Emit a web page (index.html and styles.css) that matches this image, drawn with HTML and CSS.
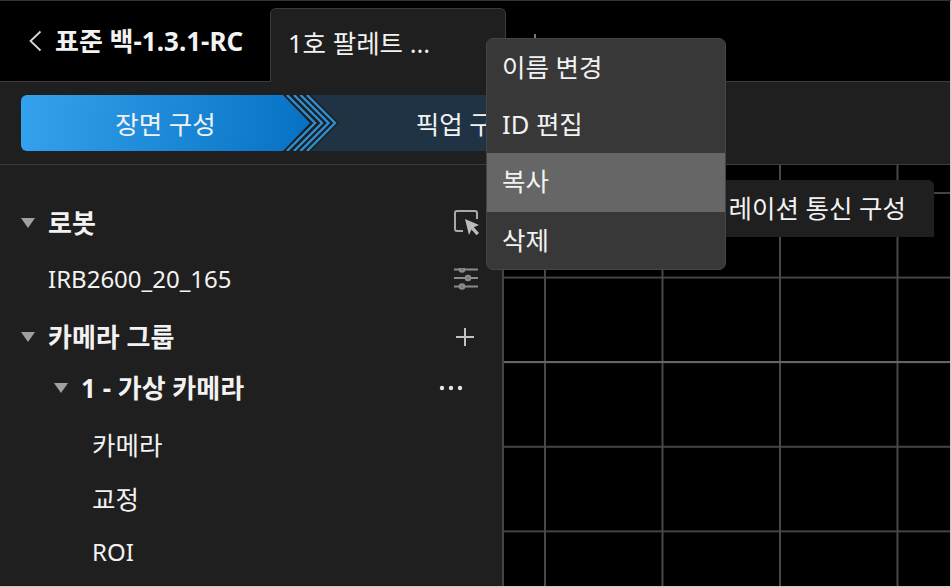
FILE: index.html
```html
<!DOCTYPE html>
<html lang="ko">
<head>
    <meta charset="UTF-8">
    <meta name="viewport" content="width=device-width, initial-scale=1.0">
    <title>표준 백-1.3.1-RC</title>
    <link rel="stylesheet" href="styles.css">
</head>
<body>
    <div class="app">
        <div class="topbar">
            <div class="back">
                <svg class="back-icon" width="14" height="22" viewBox="0 0 14 22">
                    <path d="M12.500 1.500 L2.500 11 L12.500 20.500" fill="none" stroke="#d8d8d8" stroke-width="1.800"/>
                </svg>
                <span class="back-title">표준 백-1.3.1-RC</span>
            </div>
            <div class="tab">1호 팔레트 ...</div>
            <svg class="tab-add" width="20" height="20" viewBox="0 0 20 20">
                <path d="M10 0 V20 M0 10 H20" stroke="#999" stroke-width="1.600"/>
            </svg>
        </div>

        <div class="toolbar">
            <div class="step step-active">장면 구성</div>
            <svg class="step-arrows" width="56" height="56" viewBox="0 0 56 56">
                <g fill="none" stroke="#2b8fd6" stroke-width="2.400">
                    <path d="M4 0 L32 28 L4 56"/>
                    <path d="M11 0 L39 28 L11 56"/>
                    <path d="M17.500 0 L45.500 28 L17.500 56"/>
                    <path d="M24 0 L52 28 L24 56"/>
                </g>
            </svg>
            <div class="step step-next">픽업 구성</div>
        </div>

        <div class="main">
            <div class="sidebar">
                <div class="row">
                    <span class="caret"></span>
                    <span class="row-label bold">로봇</span>
                    <svg class="row-icon row-icon-edge" width="26" height="26" viewBox="0 0 26 26">
                        <path d="M9 21 H3 Q1 21 1 19 V3 Q1 1 3 1 H21 Q23 1 23 3 V9" fill="none" stroke="#a8a8a8" stroke-width="2"/>
                        <path d="M11 9 L25 15 L19.800 17.300 L25 23 L22.500 25.300 L17.500 19.500 L15 25 Z" fill="#bcbcbc"/>
                    </svg>
                </div>
                <div class="row row-gap">
                    <span class="row-label leaf-top latin">IRB2600_20_165</span>
                    <svg class="row-icon row-icon-edge" width="26" height="24" viewBox="0 0 26 24">
                        <g fill="#777" stroke="#8c8c8c" stroke-width="2">
                            <path d="M0 1.500 H24 M0 10 H24 M0 18.500 H24"/>
                            <circle cx="8" cy="1.500" r="2.300"/>
                            <circle cx="14" cy="10" r="2.300"/>
                            <circle cx="8" cy="18.500" r="2.300"/>
                        </g>
                    </svg>
                </div>
                <div class="row row-gap">
                    <span class="caret"></span>
                    <span class="row-label bold">카메라 그룹</span>
                    <svg class="row-icon row-icon-plus" width="18" height="18" viewBox="0 0 18 18">
                        <path d="M9 0 V18 M0 9 H18" stroke="#c0c0c0" stroke-width="2"/>
                    </svg>
                </div>
                <div class="row row-nested">
                    <span class="caret"></span>
                    <span class="row-label bold">1 - 가상 카메라</span>
                    <svg class="row-icon row-icon-dots" width="24" height="6" viewBox="0 0 24 6">
                        <circle cx="3" cy="3" r="2.200" fill="#e4e4e4"/>
                        <circle cx="12" cy="3" r="2.200" fill="#e4e4e4"/>
                        <circle cx="21" cy="3" r="2.200" fill="#e4e4e4"/>
                    </svg>
                </div>
                <div class="row row-leaf row-gap"><span class="row-label">카메라</span></div>
                <div class="row row-leaf"><span class="row-label">교정</span></div>
                <div class="row row-leaf"><span class="row-label latin">ROI</span></div>
            </div>

            <div class="viewport">
                <div class="hint">레이션 통신 구성</div>
            </div>
        </div>

        <div class="menu">
            <div class="menu-item">이름 변경</div>
            <div class="menu-item">ID 편집</div>
            <div class="menu-item menu-item-hover">복사</div>
            <div class="menu-item">삭제</div>
        </div>
    </div>
</body>
</html>
```

FILE: styles.css
```css
* {
    margin: 0;
    padding: 0;
    box-sizing: border-box;
}

body {
    background: #000;
    color: #f2f2f2;
    font-family: "Noto Sans", "Noto Sans CJK KR", sans-serif;
    font-size: 25.5px;
    overflow: hidden;
}

.app {
    position: relative;
    display: flex;
    flex-direction: column;
    height: 100vh;
    overflow: hidden;
    border-top: 1px solid #333;
    border-right: 1px solid #ccc;
    border-bottom: 1px solid #ccc;
}

.latin {
    font-size: 24px;
}

/* top bar */
.topbar {
    display: flex;
    align-items: flex-end;
    height: 81px;
    background: #000;
    border-bottom: 1px solid #3c3c3c;
}

.back {
    display: flex;
    align-items: center;
    gap: 13px;
    width: 270px;
    height: 80px;
    padding: 0 0 0 28px;
}

.back-title {
    padding-bottom: 2px;
    font-size: 26px;
    font-weight: 700;
    white-space: nowrap;
}

.tab {
    width: 236px;
    height: 74px;
    margin-bottom: -1px;
    padding: 14px 0 0 17px;
    background: #1f1f1f;
    border: 1px solid #3c3c3c;
    border-bottom: none;
    border-radius: 6px 6px 0 0;
}

.tab-add {
    flex: none;
    margin: 0 0 27px 19px;
}

/* step bar */
.toolbar {
    display: flex;
    height: 83px;
    padding: 13px 0 13px 21px;
    background: #1f1f1f;
    border-bottom: 1px solid #3c3c3c;
}

.step {
    display: flex;
    align-items: center;
    justify-content: center;
    height: 56px;
    padding-bottom: 2px;
}

.step-active {
    width: 289px;
    background: linear-gradient(100deg, #34a2ee, #0671c3);
    clip-path: path("M6 0 H262 L289 28 L262 56 H6 A6 6 0 0 1 0 50 V6 A6 6 0 0 1 6 0 Z");
}

.step-arrows {
    flex: none;
    margin-left: -27px;
}

.step-next {
    width: 310px;
    margin-left: -28px;
    background: #1f3345;
    clip-path: polygon(0 0, 100% 0, 100% 100%, 0 100%, 28px 50%);
}

/* left tree */
.main {
    display: flex;
    flex: 1;
    min-height: 0;
}

.sidebar {
    flex: none;
    width: 502px;
    padding: 31px 24px 0 21px;
    background: #1f1f1f;
}

.row {
    display: flex;
    align-items: center;
    height: 54px;
}

.row-gap {
    margin-top: 3px;
}

.row-nested {
    margin-top: -3px;
    padding-left: 33px;
}

.row-leaf {
    padding-left: 71px;
}

.caret {
    flex: none;
    width: 0;
    height: 0;
    margin-right: 13px;
    border-left: 7px solid transparent;
    border-right: 7px solid transparent;
    border-top: 10px solid #a0a0a0;
}

.row-label {
    flex: 1;
    padding-bottom: 4px;
}

.row-label.bold {
    padding-bottom: 2px;
    font-size: 26px;
    font-weight: 700;
}

.leaf-top {
    padding-left: 27px;
}

.row-icon {
    flex: none;
}

.row-icon-edge {
    margin-right: -2px;
}

.row-icon-plus {
    margin-right: 4px;
}

.row-icon-dots {
    margin-right: 15px;
}

/* canvas grid */
.viewport {
    position: relative;
    flex: 1;
    border-left: 2px solid #444;
    background:
        linear-gradient(#666, #666) 0 196px / 100% 2px no-repeat,
        linear-gradient(to right, #484848 2px, transparent 2px) 40px 0 / 117.5px 100%,
        linear-gradient(to bottom, #444 2px, transparent 2px) 0 27px / 100% 84.6px,
        #000;
}

.hint {
    position: absolute;
    top: 15px;
    right: 16px;
    height: 57px;
    padding: 0 28px 0 40px;
    line-height: 56px;
    background: #1f1f1f;
    border-radius: 0 6px 0 0;
    white-space: nowrap;
}

/* context menu */
.menu {
    position: absolute;
    top: 37px;
    left: 486px;
    width: 240px;
    background: #383838;
    border: 1px solid #454545;
    border-radius: 7px;
    overflow: hidden;
}

.menu-item {
    height: 57px;
    padding-left: 15px;
    line-height: 57px;
}

.menu-item-hover {
    height: 59px;
    background: #666;
}
```
